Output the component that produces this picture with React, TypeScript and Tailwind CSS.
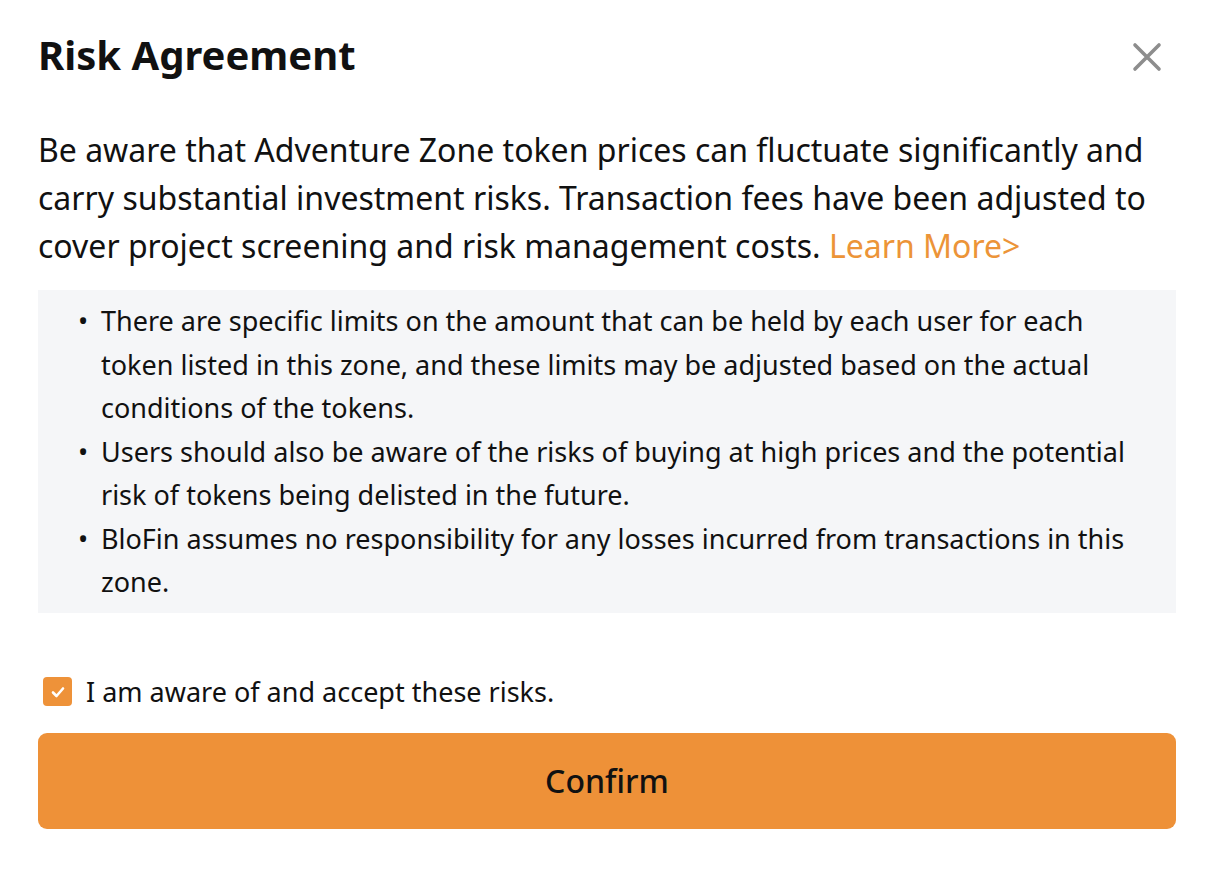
import React, { useState } from 'react';

const font = { fontFamily: '"Noto Sans", "Open Sans", Arial, sans-serif' };

const points = [
  'There are specific limits on the amount that can be held by each user for each token listed in this zone, and these limits may be adjusted based on the actual conditions of the tokens.',
  'Users should also be aware of the risks of buying at high prices and the potential risk of tokens being delisted in the future.',
  'BloFin assumes no responsibility for any losses incurred from transactions in this zone.',
];

export default function App() {
  const [accepted, setAccepted] = useState(true);

  return (
    <div className="w-[1224px] h-[875px] bg-white text-[#111111]" style={font}>
      <div className="pl-[38px] pr-[48px] pt-[26px]">
        <div className="flex items-start justify-between">
          <h1 className="text-[40px] leading-[58px] font-bold">Risk Agreement</h1>
          <button className="mt-[16px] mr-[14px] text-[#8d8d8d]">
            <svg width="30" height="30" viewBox="0 0 30 30" fill="none" stroke="currentColor" strokeWidth="3.6" strokeLinecap="round">
              <path d="M3 3 L27 27 M27 3 L3 27" />
            </svg>
          </button>
        </div>

        <p className="mt-[42px] text-[32px] leading-[48px]">
          Be aware that Adventure Zone token prices can fluctuate significantly and carry substantial investment risks.
          Transaction fees have been adjusted to cover project screening and risk management costs.{' '}
          <a className="text-[#ec9438]">Learn More&gt;</a>
        </p>

        <div className="mt-[20px] bg-[#f5f6f8] pl-[40px] pr-[30px] pt-[9px] pb-[9px]">
          <ul className="text-[27px] leading-[43.5px]">
            {points.map((t) => (
              <li key={t} className="flex">
                <span className="w-[23px] shrink-0">•</span>
                <span>{t}</span>
              </li>
            ))}
          </ul>
        </div>

        <label className="mt-[59px] flex items-center gap-[14px] pl-[5px] cursor-pointer">
          <span
            onClick={() => setAccepted(!accepted)}
            className={`w-[29px] h-[29px] rounded-[4px] flex items-center justify-center ${accepted ? 'bg-[#ee9239]' : 'border-2 border-[#cccccc]'}`}
          >
            {accepted && (
              <svg width="20" height="20" viewBox="0 0 20 20" fill="none" stroke="white" strokeWidth="2.6" strokeLinecap="round" strokeLinejoin="round">
                <path d="M5 10.5 L8.5 14 L15 6.5" />
              </svg>
            )}
          </span>
          <span className="text-[27px] leading-[40px]">I am aware of and accept these risks.</span>
        </label>

        <button className="mt-[21px] w-full h-[96px] rounded-[9px] bg-[#ee9138] text-[32px] font-medium text-[#111111]">
          Confirm
        </button>
      </div>
    </div>
  );
}
